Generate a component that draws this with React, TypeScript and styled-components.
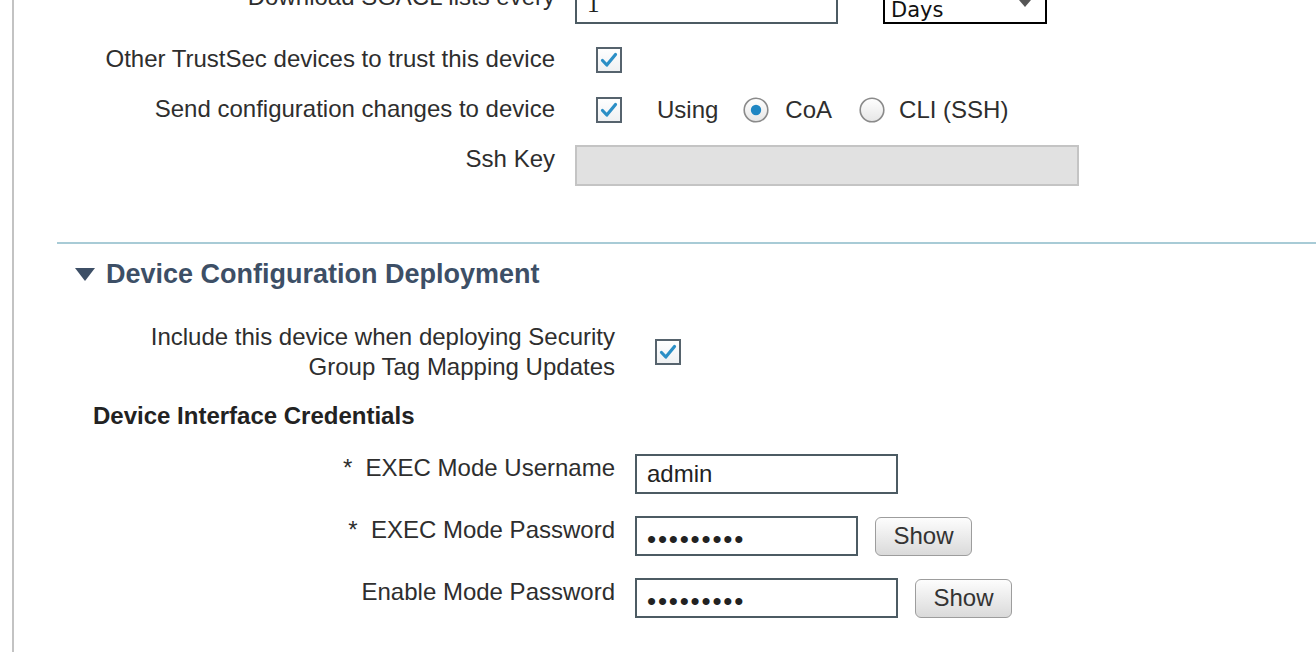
import React from "react";
import styled, { createGlobalStyle } from "styled-components";

const Global = createGlobalStyle`
  html, body { margin: 0; padding: 0; background: #fff; overflow: hidden; }
  body { font-family: "Liberation Sans", Arial, sans-serif; color: #333; }
`;

const Frame = styled.div`
  margin-left: 12px;
  border-left: 2px solid #c3c3c3;
  height: 652px;
  overflow: hidden;
`;

const Inner = styled.div`
  margin-top: -17px;
`;

const FieldGrid = styled.div<{ $labelWidth: number; $rowGap: number }>`
  display: grid;
  grid-template-columns: ${(p) => p.$labelWidth}px 1fr;
  column-gap: 20px;
  row-gap: ${(p) => p.$rowGap}px;
  align-items: start;
`;

const Label = styled.div`
  text-align: right;
  font-size: 24px;
  line-height: 28px;
  color: #2e2e2e;
  white-space: nowrap;
`;

const WrapLabel = styled(Label)`
  white-space: normal;
  line-height: 30px;
  align-self: center;
`;

const Controls = styled.div<{ $center?: boolean }>`
  display: flex;
  align-items: center;
  min-height: 29px;
  align-self: ${(p) => (p.$center ? "center" : "start")};
`;

const TextBox = styled.input<{ $w: number; $h?: number; $serif?: boolean }>`
  box-sizing: border-box;
  width: ${(p) => p.$w}px;
  height: ${(p) => p.$h ?? 40}px;
  border: 2px solid #4c5b63;
  background: #fff;
  padding: 0 10px;
  font-family: ${(p) =>
    p.$serif ? `"Liberation Serif", "Times New Roman", serif` : `"Liberation Sans", Arial, sans-serif`};
  font-size: ${(p) => (p.$serif ? 25 : 24)}px;
  color: #222;
  outline: none;
  margin: 0;
`;

const PasswordBox = styled(TextBox)`
  font-size: 26px;
  letter-spacing: 1.8px;
  padding-top: 6px;
`;

const DisabledBox = styled.div`
  box-sizing: border-box;
  width: 504px;
  height: 41px;
  background: #e1e1e1;
  border: 2px solid #c4c4c4;
`;

const SelectBox = styled.div`
  box-sizing: border-box;
  margin-left: 45px;
  width: 164px;
  height: 40px;
  border: 2px solid #000;
  display: flex;
  align-items: flex-end;
  justify-content: space-between;
  padding: 0 14px 0 6px;
  font-family: "DejaVu Sans", Verdana, sans-serif;
  font-size: 21px;
  color: #111;
  line-height: 24px;
`;

const SelectArrow = styled.span`
  width: 0;
  height: 0;
  border-left: 6px solid transparent;
  border-right: 6px solid transparent;
  border-top: 7px solid #555;
  margin-bottom: 15px;
`;

const Inline = styled.span<{ $ml?: number }>`
  font-size: 24px;
  color: #2e2e2e;
  margin-left: ${(p) => p.$ml ?? 0}px;
`;

const IconWrap = styled.span<{ $ml?: number }>`
  display: inline-flex;
  margin-left: ${(p) => p.$ml ?? 0}px;
`;

const Checkbox = ({ ml = 21 }: { ml?: number }) => (
  <IconWrap $ml={ml}>
    <svg width="26" height="26" viewBox="0 0 26 26">
      <defs>
        <linearGradient id="cbg" x1="0" y1="0" x2="0" y2="1">
          <stop offset="0" stopColor="#ffffff" />
          <stop offset="1" stopColor="#eef0f2" />
        </linearGradient>
      </defs>
      <rect x="1" y="1" width="24" height="24" fill="url(#cbg)" stroke="#56636d" strokeWidth="2" />
      <path d="M6.5 13.5 L10.8 18 L19.5 7.5" fill="none" stroke="#2b8fc6" strokeWidth="3.2" strokeLinecap="round" strokeLinejoin="round" />
    </svg>
  </IconWrap>
);

const Radio = ({ on, ml }: { on?: boolean; ml: number }) => (
  <IconWrap $ml={ml}>
    <svg width="26" height="26" viewBox="0 0 26 26">
      <defs>
        <linearGradient id="rbg" x1="0" y1="0" x2="0" y2="1">
          <stop offset="0" stopColor="#ffffff" />
          <stop offset="1" stopColor="#e6e6e6" />
        </linearGradient>
      </defs>
      <circle cx="13" cy="13" r="11.8" fill="url(#rbg)" stroke="#8a8a8a" strokeWidth="1.6" />
      {on && <circle cx="13" cy="13" r="5.2" fill="#1f86c3" />}
    </svg>
  </IconWrap>
);

const Separator = styled.div`
  margin: 56px 0 0 43px;
  border-top: 2px solid #a8cbd6;
`;

const SectionHeader = styled.div`
  display: flex;
  align-items: center;
  margin: 15px 0 0 61px;
  height: 30px;
`;

const HeaderTitle = styled.h2`
  margin: 0 0 0 11px;
  font-size: 27px;
  font-weight: bold;
  color: #3d4f66;
  line-height: 30px;
`;

const Section2 = styled.div`
  margin-top: 33px;
`;

const SubHeading = styled.h3`
  margin: 20px 0 24px 79px;
  font-size: 24px;
  line-height: 28px;
  font-weight: bold;
  color: #222;
`;

const ShowButton = styled.button<{ $ml: number }>`
  box-sizing: border-box;
  margin-left: ${(p) => p.$ml}px;
  width: 97px;
  height: 39px;
  border: 1.5px solid #9d9d9d;
  border-radius: 6px;
  background: linear-gradient(#fdfdfd, #dadada);
  font-family: "Liberation Sans", Arial, sans-serif;
  font-size: 24px;
  color: #333;
  padding: 0;
`;

export default function App() {
  return (
    <>
      <Global />
      <Frame>
        <Inner>
          <FieldGrid $labelWidth={541} $rowGap={21}>
            <Label>Download SGACL lists every</Label>
            <Controls>
              <TextBox $w={263} $h={41} $serif defaultValue="1" readOnly />
              <SelectBox>
                <span>Days</span>
                <SelectArrow />
              </SelectBox>
            </Controls>

            <Label>Other TrustSec devices to trust this device</Label>
            <Controls>
              <Checkbox />
            </Controls>

            <Label>Send configuration changes to device</Label>
            <Controls>
              <Checkbox />
              <Inline $ml={35}>Using</Inline>
              <Radio on ml={25} />
              <Inline $ml={16}>CoA</Inline>
              <Radio ml={27} />
              <Inline $ml={14}>CLI (SSH)</Inline>
            </Controls>

            <Label>Ssh Key</Label>
            <DisabledBox />
          </FieldGrid>

          <Separator />
          <SectionHeader>
            <svg width="20" height="13" viewBox="0 0 20 13">
              <path d="M0 0 H20 L10 13 Z" fill="#3d4f66" />
            </svg>
            <HeaderTitle>Device Configuration Deployment</HeaderTitle>
          </SectionHeader>

          <Section2>
            <FieldGrid $labelWidth={601} $rowGap={22}>
              <WrapLabel>
                Include this device when deploying Security
                <br />
                Group Tag Mapping Updates
              </WrapLabel>
              <Controls $center>
                <Checkbox ml={20} />
              </Controls>
            </FieldGrid>

            <SubHeading>Device Interface Credentials</SubHeading>

            <FieldGrid $labelWidth={601} $rowGap={22}>
              <Label>*&nbsp; EXEC Mode Username</Label>
              <Controls>
                <TextBox $w={263} defaultValue="admin" readOnly />
              </Controls>

              <Label>*&nbsp; EXEC Mode Password</Label>
              <Controls>
                <PasswordBox $w={223} type="password" defaultValue="123456789" readOnly />
                <ShowButton $ml={17}>Show</ShowButton>
              </Controls>

              <Label>Enable Mode Password</Label>
              <Controls>
                <PasswordBox $w={263} type="password" defaultValue="123456789" readOnly />
                <ShowButton $ml={17}>Show</ShowButton>
              </Controls>
            </FieldGrid>
          </Section2>
        </Inner>
      </Frame>
    </>
  );
}
